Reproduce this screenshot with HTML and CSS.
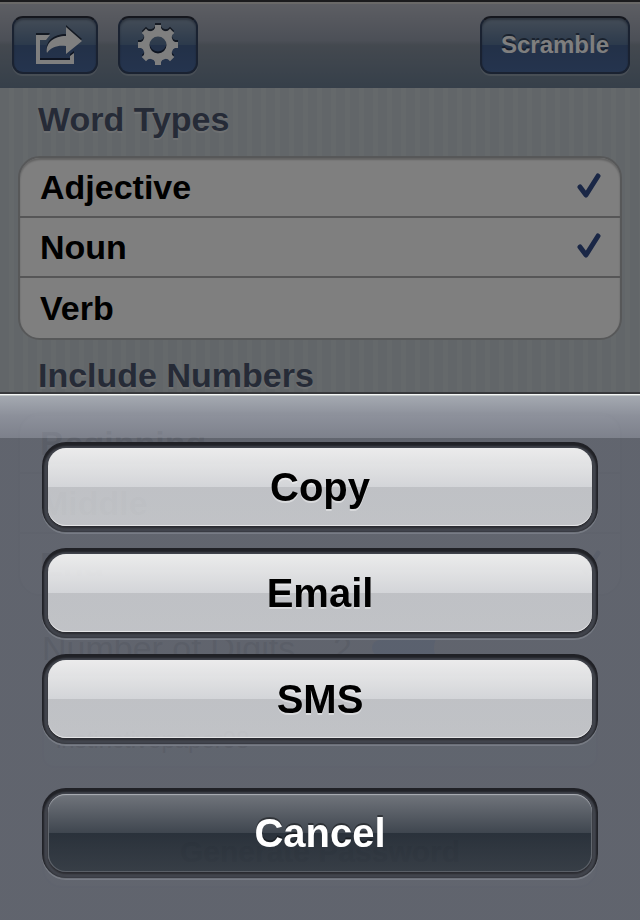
FILE: index.html
```html
<!DOCTYPE html>
<html lang="en">
<head>
<meta charset="utf-8">
<meta name="viewport" content="width=device-width, initial-scale=1">
<title>Password Settings</title>
<link rel="stylesheet" href="styles.css">
</head>
<body>
<div class="app">
  <header class="toolbar">
    <button class="tool tool-share" type="button" aria-label="Share">
      <svg class="tool-icon" width="46" height="38" viewBox="0 0 46 38" aria-hidden="true">
        <path d="M14 9H0v29h38V27l-4 3v4H4V14h6z"/>
        <path d="M30 1l16 14L30 28v-8c-8-1-15 1-19 7 -2-10 7-17 19-17z"/>
      </svg>
    </button>
    <button class="tool tool-gear" type="button" aria-label="Settings">
      <svg class="tool-icon" width="40" height="42" viewBox="-20 -21 40 42" aria-hidden="true">
        <defs><path id="tooth" d="M-5-14L-3-17V-20H3V-17L5-14z"/></defs>
        <circle r="12" fill="none" stroke="#fff" stroke-width="7"/>
        <use href="#tooth"/>
        <use href="#tooth" transform="rotate(45)"/>
        <use href="#tooth" transform="rotate(90)"/>
        <use href="#tooth" transform="rotate(135)"/>
        <use href="#tooth" transform="rotate(180)"/>
        <use href="#tooth" transform="rotate(225)"/>
        <use href="#tooth" transform="rotate(270)"/>
        <use href="#tooth" transform="rotate(315)"/>
      </svg>
    </button>
    <button class="tool tool-text" type="button">Scramble</button>
  </header>

  <main class="content">
    <h2 class="heading">Word Types</h2>
    <div class="group">
      <label class="row">Adjective
        <span class="tick"><input type="checkbox" checked><svg width="26" height="28" viewBox="0 0 26 28" aria-hidden="true"><path d="M4 14l6 8L22 3"/></svg></span>
      </label>
      <label class="row">Noun
        <span class="tick"><input type="checkbox" checked><svg width="26" height="28" viewBox="0 0 26 28" aria-hidden="true"><path d="M4 14l6 8L22 3"/></svg></span>
      </label>
      <label class="row">Verb
        <span class="tick"><input type="checkbox"><svg width="26" height="28" viewBox="0 0 26 28" aria-hidden="true"><path d="M4 14l6 8L22 3"/></svg></span>
      </label>
    </div>

    <h2 class="heading">Include Numbers</h2>
    <div class="group">
      <label class="row">Beginning
        <span class="tick"><input type="checkbox"><svg width="26" height="28" viewBox="0 0 26 28" aria-hidden="true"><path d="M4 14l6 8L22 3"/></svg></span>
      </label>
      <label class="row">Middle
        <span class="tick"><input type="checkbox"><svg width="26" height="28" viewBox="0 0 26 28" aria-hidden="true"><path d="M4 14l6 8L22 3"/></svg></span>
      </label>
      <label class="row">End
        <span class="tick"><input type="checkbox" checked><svg width="26" height="28" viewBox="0 0 26 28" aria-hidden="true"><path d="M4 14l6 8L22 3"/></svg></span>
      </label>
    </div>

    <div class="digits">
      <label for="digits">Number of Digits</label>
      <output for="digits">2</output>
      <input class="slider" id="digits" type="range" min="0" max="6" value="2">
    </div>
    <input class="field" type="text" value="instinctivepaper98" aria-label="Password">
    <button class="generate" type="button">Generate Password</button>
  </main>
</div>

<div class="backdrop"></div>
<div class="sheet" role="dialog" aria-label="Share password">
  <button class="action" type="button">Copy</button>
  <button class="action" type="button">Email</button>
  <button class="action" type="button">SMS</button>
  <button class="action cancel" type="button">Cancel</button>
</div>
</body>
</html>
```
FILE: styles.css
```css
* {
  box-sizing: border-box;
}

body {
  margin: 0;
  font-family: "Liberation Sans", Arial, Helvetica, sans-serif;
  font-size: 34px;
  color: #000;
}

button,
input {
  font-family: inherit;
  margin: 0;
}

.app {
  min-height: 100vh;
  background: repeating-linear-gradient(90deg, #c5ccd2 0 9px, #cbd2d6 9px 14px);
}

/* Toolbar */
.toolbar {
  display: flex;
  align-items: flex-start;
  gap: 20px;
  height: 88px;
  padding: 14px 10px 0 12px;
  border-top: 2px solid #36363a;
  background: linear-gradient(#bcbec8, #989fae 45%, #88929f 50%, #6c7f94);
  box-shadow: inset 0 2px 0 #d4d2d0;
}

.tool {
  display: flex;
  align-items: center;
  justify-content: center;
  width: 86px;
  height: 58px;
  padding: 0;
  border: 2px solid #344562;
  border-top-color: #2a2e3c;
  border-radius: 11px;
  background: linear-gradient(#8c9cb0, #587498 50%, #466290 50%, #4a699e) border-box;
  box-shadow: inset 0 2px 2px rgba(30, 40, 60, 0.4), 0 2px 0 rgba(255, 255, 255, 0.2);
  color: #fff;
}

.tool-share {
  padding-left: 8px;
}

.tool-gear {
  width: 80px;
}

.tool-text {
  width: 150px;
  margin-left: auto;
  font-size: 24px;
  font-weight: bold;
  text-shadow: 0 -2px 0 rgba(20, 30, 50, 0.6);
}

.tool-icon {
  fill: #fff;
  filter: drop-shadow(0 -2px 0 rgba(10, 16, 30, 0.7));
}

/* Grouped settings */
.content {
  padding: 14px 18px 0 18px;
}

.heading {
  margin: 18px 20px 20px;
  font-size: 34px;
  line-height: 34px;
  color: #4c566e;
  text-shadow: 0 2px 0 rgba(255, 255, 255, 0.4);
}

.heading:first-child {
  margin-top: 0;
}

.group {
  border: 2px solid #aeb0b2;
  border-radius: 22px;
  background: #fff;
  box-shadow: inset 0 2px 2px #c4c4c4;
}

.row {
  display: flex;
  align-items: center;
  justify-content: space-between;
  height: 60px;
  padding: 0 18px 0 20px;
  border-bottom: 2px solid #acacae;
  font-weight: bold;
}

.row:last-child {
  border-bottom: 0;
}

.tick {
  display: grid;
}

.tick input,
.tick svg {
  grid-area: 1 / 1;
}

.tick input {
  width: 26px;
  height: 28px;
  appearance: none;
}

.tick svg {
  visibility: hidden;
  fill: none;
  stroke: #344e8c;
  stroke-width: 5;
  stroke-linecap: round;
  stroke-linejoin: round;
  pointer-events: none;
}

.tick input:checked + svg {
  visibility: visible;
}

.digits {
  display: grid;
  grid-template-columns: 1fr auto 226px;
  column-gap: 20px;
  align-items: center;
  margin: 34px 24px 46px;
  line-height: 36px;
}

.slider {
  width: 100%;
  height: 16px;
  border-radius: 8px;
  appearance: none;
  background: linear-gradient(90deg, #1068e8 32%, #c8c8c8 32%);
}

.slider::-webkit-slider-thumb {
  appearance: none;
  width: 40px;
  height: 40px;
  border-radius: 20px;
  background: #dcdcdc;
}

.field,
.generate {
  display: block;
  width: calc(100% - 48px);
  margin: 0 24px;
}

.field {
  height: 56px;
  padding: 0 12px;
  border: 2px solid #b8bcc0;
  border-radius: 12px;
  background: #dce0e4;
  font-size: 24px;
}

.generate {
  height: 72px;
  margin-top: 48px;
  border: 2px solid #b8bcc0;
  border-radius: 20px;
  background: #e0e4e8;
  font-size: 30px;
  font-weight: bold;
}

/* Action sheet */
.backdrop {
  position: fixed;
  inset: 0;
  background: rgba(0, 0, 0, 0.5);
}

.sheet {
  position: fixed;
  left: 0;
  right: 0;
  bottom: 0;
  display: flex;
  flex-direction: column;
  gap: 28px;
  padding: 54px 48px 48px;
  border-top: 2px solid #38393c;
  background:
    linear-gradient(#f4f6f6 0 1px, #c4c9c9 1px 2px, rgba(168, 173, 181, 0.95) 2px, rgba(142, 146, 157, 0.95) 22px, rgba(126, 130, 141, 0.95) 44px, transparent 44px),
    linear-gradient(transparent 44px, rgba(96, 100, 110, 0.94) 44px);
}

.action {
  padding: 16px;
  border: 0;
  border-radius: 18px;
  background: linear-gradient(rgba(240, 240, 240, 0.97), rgba(240, 241, 243, 0.8) 50%, rgba(242, 243, 244, 0.65) 50%, rgba(244, 245, 246, 0.65));
  box-shadow:
    inset 0 -1px 0 #e4e4e6,
    0 2px 2px #2a2b30,
    0 2px 2px 4px #43464e,
    0 0 0 6px #202126,
    0 2px 0 6px #7c8089;
  font-size: 40px;
  font-weight: bold;
  line-height: 46px;
  color: #000;
  text-shadow: 0 2px 0 rgba(255, 255, 255, 0.4);
}

.cancel {
  margin-top: 28px;
  background: linear-gradient(#71757c, #3f464f 50%, rgba(19, 28, 37, 0.7) 50%, rgba(41, 49, 57, 0.75));
  box-shadow:
    inset 0 1px 1px #b0b3b8,
    inset 0 0 0 1px #5a5f67,
    0 2px 2px #2a2b30,
    0 2px 2px 4px #43464e,
    0 0 0 6px #202126,
    0 2px 0 6px #7c8089;
  color: #fff;
  text-shadow: 0 -2px 0 rgba(0, 0, 0, 0.4);
}
```
